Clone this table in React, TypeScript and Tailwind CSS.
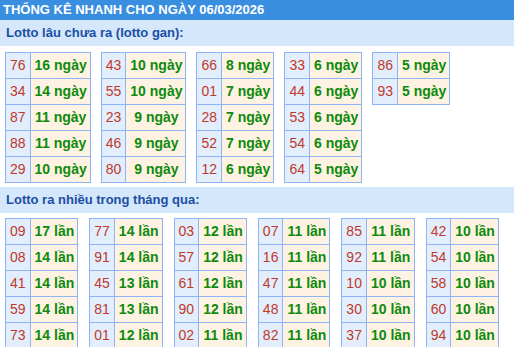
import React from 'react';

type Pair = [string, string];

const gan: Pair[][] = [
  [['76', '16'], ['34', '14'], ['87', '11'], ['88', '11'], ['29', '10']],
  [['43', '10'], ['55', '10'], ['23', '9'], ['46', '9'], ['80', '9']],
  [['66', '8'], ['01', '7'], ['28', '7'], ['52', '7'], ['12', '6']],
  [['33', '6'], ['44', '6'], ['53', '6'], ['54', '6'], ['64', '5']],
  [['86', '5'], ['93', '5']],
];

const nhieu: Pair[][] = [
  [['09', '17'], ['08', '14'], ['41', '14'], ['59', '14'], ['73', '14']],
  [['77', '14'], ['91', '14'], ['45', '13'], ['81', '13'], ['01', '12']],
  [['03', '12'], ['57', '12'], ['61', '12'], ['90', '12'], ['02', '11']],
  [['07', '11'], ['16', '11'], ['47', '11'], ['48', '11'], ['82', '11']],
  [['85', '11'], ['92', '11'], ['10', '10'], ['30', '10'], ['37', '10']],
  [['42', '10'], ['54', '10'], ['58', '10'], ['60', '10'], ['94', '10']],
];

const StatTable: React.FC<{ rows: Pair[]; unit: string }> = ({ rows, unit }) => (
  <table className="shrink-0 self-start whitespace-nowrap border-collapse border border-[#8fb4f5]">
    <tbody>
      {rows.map(([num, count]) => (
        <tr key={num} className="h-[26px]">
          <td className="border border-[#8fb4f5] bg-[#e2eefc] px-[4px] text-center text-[#c0392b]">{num}</td>
          <td className="border border-[#8fb4f5] bg-[#fef3e2] pl-[4px] pr-[3px] text-center font-bold text-[#0e8a0e]">
            {count} {unit}
          </td>
        </tr>
      ))}
    </tbody>
  </table>
);

export default function App() {
  return (
    <div className="w-[514px] h-[347px] overflow-hidden bg-white font-['Liberation_Sans',Arial,sans-serif] text-[14px]">
      <div className="h-[20px] bg-[#3a8ee0] pl-[3px] text-[13px] font-bold leading-[20px] text-white">
        THỐNG KÊ NHANH CHO NGÀY 06/03/2026
      </div>
      <div className="h-[26px] bg-[#d4e7fb] pl-[6px] text-[13px] font-bold leading-[26px] text-[#1b4ea3]">
        Lotto lâu chưa ra (lotto gan):
      </div>
      <div className="flex h-[141px] gap-[10px] pl-[5px] pt-[6px]">
        {gan.map((t, i) => (
          <StatTable key={i} rows={t} unit="ngày" />
        ))}
      </div>
      <div className="h-[26px] bg-[#d4e7fb] pl-[6px] text-[13px] font-bold leading-[26px] text-[#1b4ea3]">
        Lotto ra nhiều trong tháng qua:
      </div>
      <div className="flex gap-[11px] pl-[5px] pt-[5px]">
        {nhieu.map((t, i) => (
          <StatTable key={i} rows={t} unit="lần" />
        ))}
      </div>
    </div>
  );
}
